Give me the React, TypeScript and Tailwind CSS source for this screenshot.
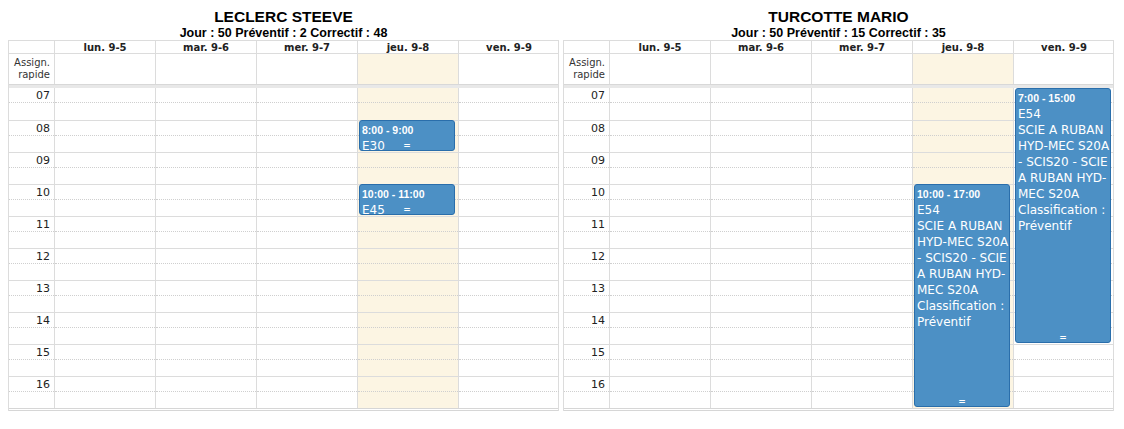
import React from 'react';

type Ev = { day: number; start: number; end: number; lines: string[] };

const days = ['lun. 9-5', 'mar. 9-6', 'mer. 9-7', 'jeu. 9-8', 'ven. 9-9'];
const hours = ['07', '08', '09', '10', '11', '12', '13', '14', '15', '16'];
const HOUR = 32;

const detail = [
  'E54',
  'SCIE A RUBAN',
  'HYD-MEC S20A',
  '- SCIS20 - SCIE',
  'A RUBAN HYD-',
  'MEC S20A',
  'Classification :',
  'Préventif',
];

const tech = [
  {
    name: 'LECLERC STEEVE',
    stats: 'Jour : 50 Préventif : 2 Correctif : 48',
    events: [
      { day: 3, start: 8, end: 9, lines: ['E30'] },
      { day: 3, start: 10, end: 11, lines: ['E45'] },
    ] as Ev[],
  },
  {
    name: 'TURCOTTE MARIO',
    stats: 'Jour : 50 Préventif : 15 Correctif : 35',
    events: [
      { day: 3, start: 10, end: 17, lines: detail },
      { day: 4, start: 7, end: 15, lines: detail },
    ] as Ev[],
  },
];

const narrow = "font-['Liberation_Sans',Arial,sans-serif]";

function fmt(h: number) {
  return `${h}:00`;
}

function EventBox({ ev }: { ev: Ev }) {
  return (
    <div
      className="absolute left-[1px] right-[3px] z-10 flex flex-col rounded-[3px] border border-[#2a6eab] bg-[#4c90c5] px-[2px] pt-[1px] text-white"
      style={{ top: (ev.start - 7) * HOUR, height: (ev.end - ev.start) * HOUR - 1 }}
    >
      <div className={`${narrow} text-[10.5px] font-bold leading-[16px]`}>
        {fmt(ev.start)} - {fmt(ev.end)}
      </div>
      {ev.lines.map((l, i) => (
        <div key={i} className="whitespace-nowrap text-[12px] leading-[16px]">
          {l}
        </div>
      ))}
      <div className="absolute bottom-[1px] left-0 right-0 text-center text-[9px] font-bold leading-[8px]">=</div>
    </div>
  );
}

function Calendar({ name, stats, events }: { name: string; stats: string; events: Ev[] }) {
  return (
    <div className="flex w-[551px] flex-col">
      <div className={`${narrow} pt-[8px] text-center text-[15.5px] font-bold leading-[18px] text-black`}>{name}</div>
      <div className={`${narrow} text-center text-[12.5px] font-bold leading-[14px] text-black`}>{stats}</div>
      <div className="border border-b-0 border-[#dcdcdc]">
        {/* header */}
        <div className="grid grid-cols-[45px_repeat(5,101px)] border-b border-[#dcdcdc]">
          <div className="h-[12px]" />
          {days.map((d) => (
            <div key={d} className="h-[12px] border-l border-[#dcdcdc] text-center text-[10px] font-bold leading-[13px] text-[#222]">
              {d}
            </div>
          ))}
        </div>
        <div className="grid grid-cols-[45px_repeat(5,101px)]">
          <div className="h-[30px] pr-[4px] pt-[3px] text-right text-[10px] leading-[12px] text-[#333]">
            Assign.
            <br />
            rapide
          </div>
          {days.map((d, i) => (
            <div key={d} className={`h-[30px] border-l border-[#dcdcdc] ${i === 3 ? 'bg-[#fcf5e3]' : ''}`} />
          ))}
        </div>
        <div className="h-[4px] border-t border-[#d8d8d8] bg-[#e8e8e8]" />
        {/* body */}
        <div className="grid grid-cols-[45px_repeat(5,101px)] border-b-[3px] border-double border-[#d6d6d6]">
          <div>
            {hours.map((h) => (
              <div key={h} className="h-[32px] border-t border-[#dcdcdc] first:border-t-0">
                <div className="h-[15px] border-b border-dotted border-[#cfcfcf] pr-[4px] pt-[2px] text-right text-[11px] leading-[12px] text-[#222]">
                  {h}
                </div>
              </div>
            ))}
          </div>
          {days.map((d, i) => (
            <div key={d} className={`relative border-l border-[#dcdcdc] ${i === 3 ? 'bg-[#fcf5e3]' : ''}`}>
              {hours.map((h) => (
                <div key={h} className="h-[32px] border-t border-[#dcdcdc] first:border-t-0">
                  <div className="h-[15px] border-b border-dotted border-[#cfcfcf]" />
                </div>
              ))}
              {events
                .filter((e) => e.day === i)
                .map((e, k) => (
                  <EventBox key={k} ev={e} />
                ))}
            </div>
          ))}
        </div>
      </div>
    </div>
  );
}

export default function App() {
  return (
    <div
      className="flex h-[429px] w-[1124px] gap-[4px] bg-white pl-[8px]"
      style={{ fontFamily: "Tahoma, 'DejaVu Sans', Verdana, sans-serif" }}
    >
      {tech.map((t) => (
        <Calendar key={t.name} {...t} />
      ))}
    </div>
  );
}
